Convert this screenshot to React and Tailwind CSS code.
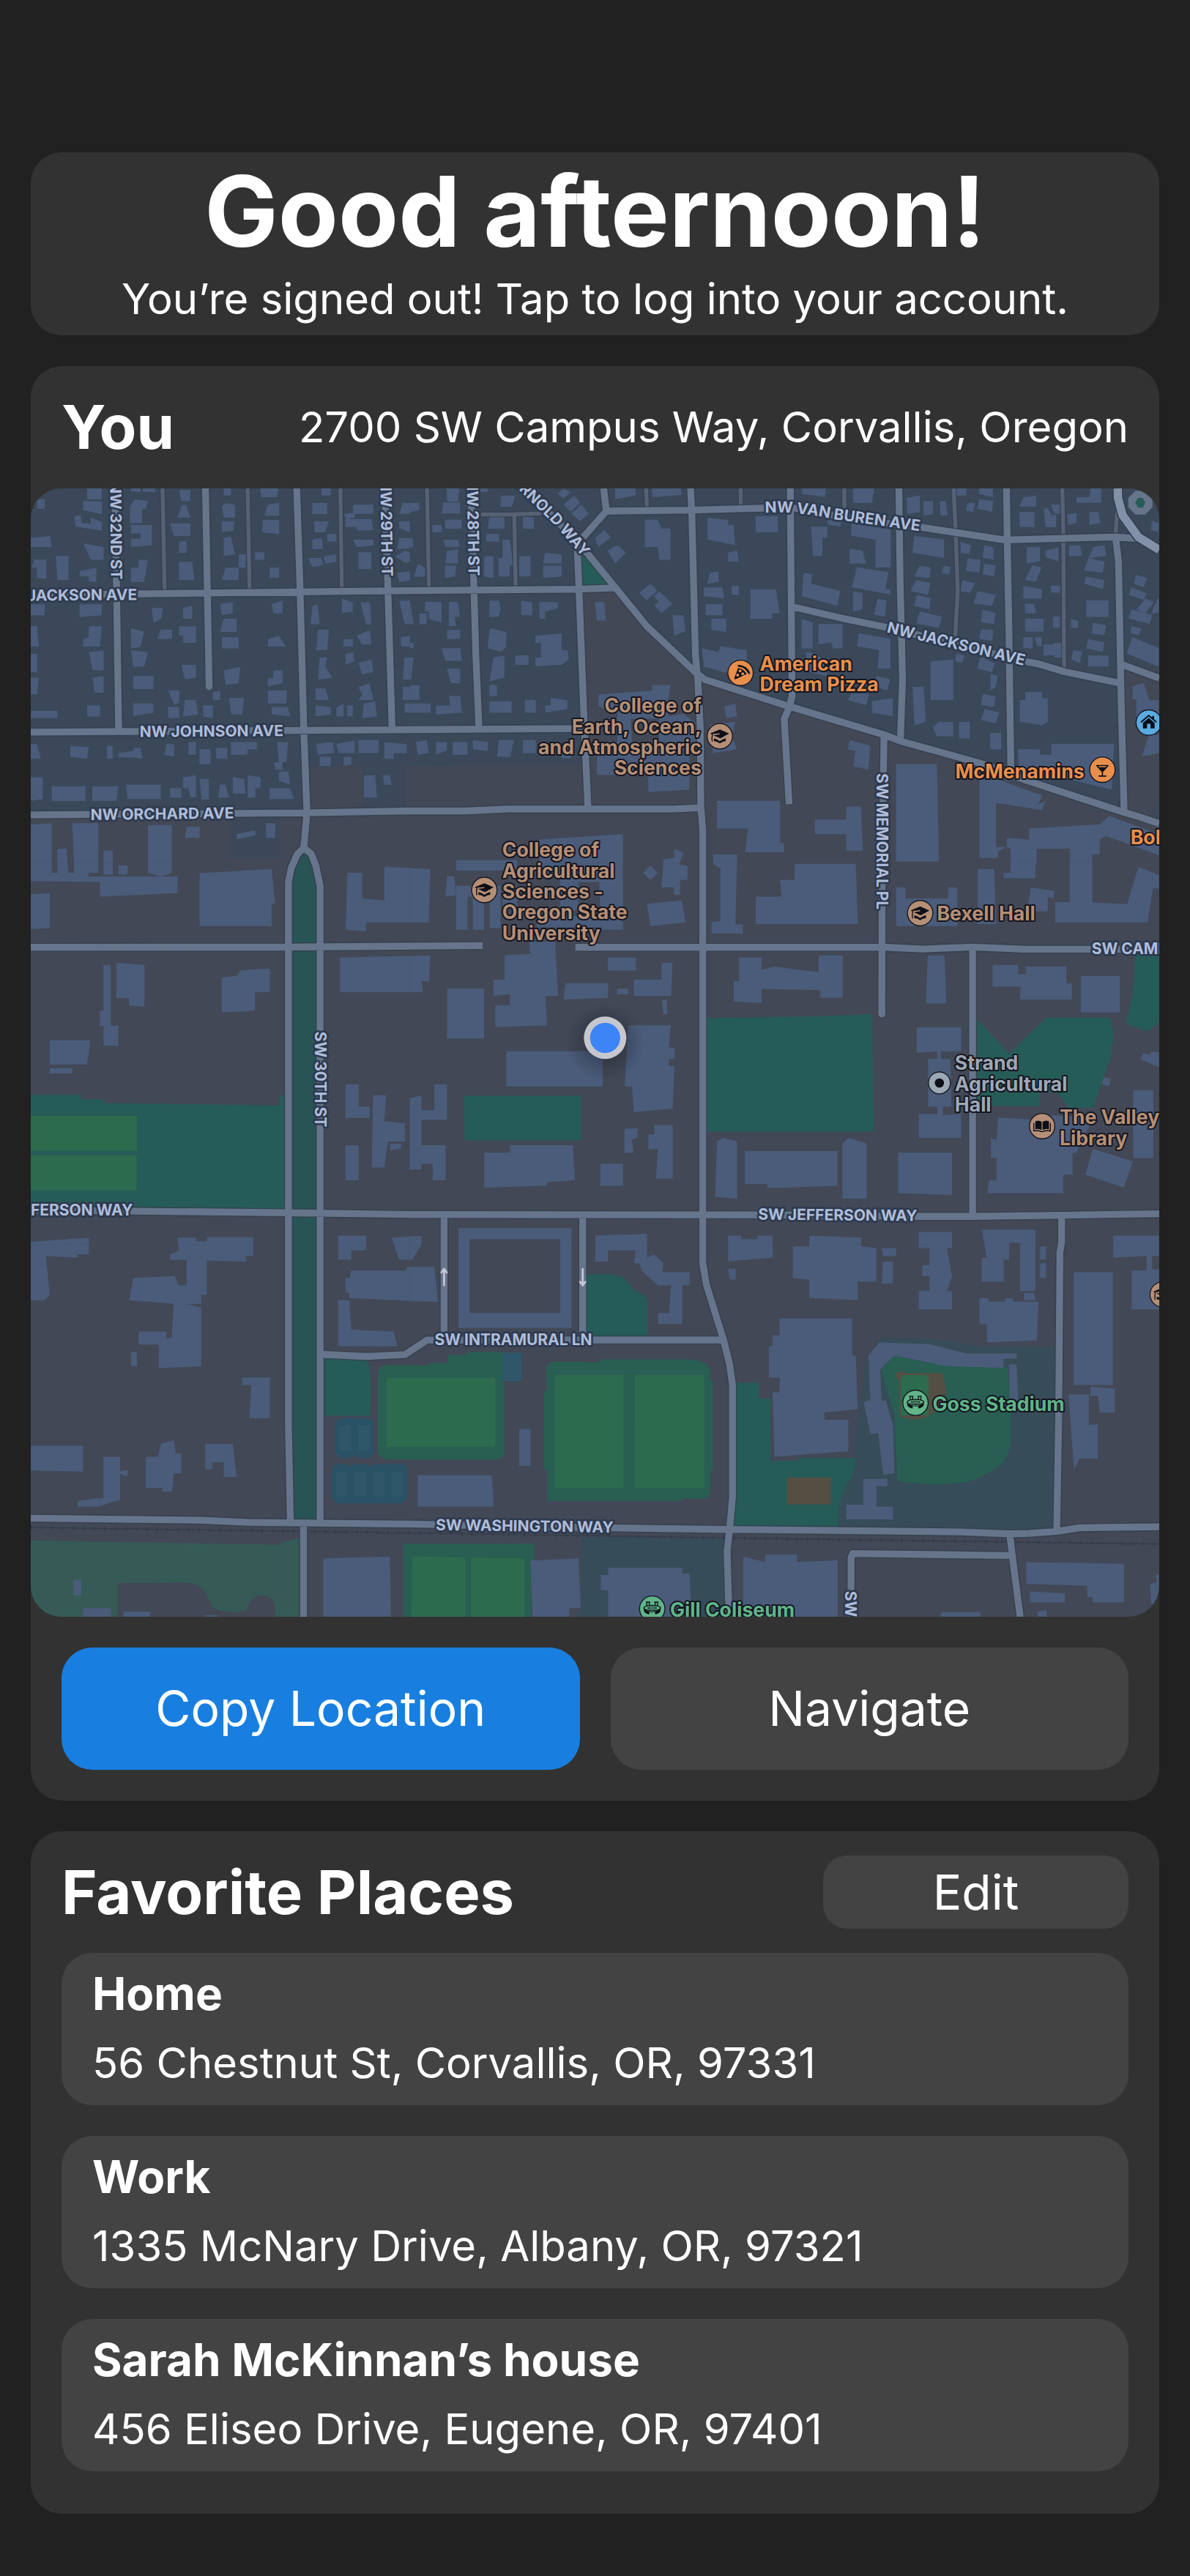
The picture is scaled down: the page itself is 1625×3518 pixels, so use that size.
import React from "react";

/* ---------- Map geometry ---------- */

/* Building footprints, grouped by map tile. */
const BUILDING_TILES = [
  {
    transform: "translate(-6 -21)",
    d: "M32 66h31v38h-31z M237 0H297V66H237z M221 72L298 76V126L221 110z M184 134L211 131L214 163L252 166V141L298 158V194L191 178z M0 224L84 216L93 262H0z M221 246L305 262V314H252z M109 298H161V396H115z M20 314H70V390H32V345H10z M206 360L275 345V404H244V382L206 381z M0 496H63V541H0z M206 496H297V541L206 548z M0 585H32L39 669H0z M244 585L297 587L290 669H221V640L244 630z M0 699H32V774H0z M244 692L305 685V767H260z M0 797H39L32 864H0z M260 797L305 790V858H268z M237 910H290V956H237z M0 933H115V963H0z M417 0H455V36L417 34z M465 0H516V36L465 34z M432 66L486 73L478 104H463V163H412V96z M417 171H502V254L417 261V227H456V206H417z M448 314H486L471 405H417V346H448z M614 28L660 27V73H622z M625 89H643L660 141H607z M577 164H660V216H592z M614 238H645V285H614z M614 322H668L676 396H614z M501 511H547L540 556L509 571z M630 511L668 502V555H630z M539 600H585V638H524z M614 586H683V654H630V624H614z M417 594L471 608L456 670L417 677z M417 684L486 692L471 752H426z M426 790H509V843H426z M426 903H509V940L426 955z M623 744H683V797L638 804z M569 849H615V900L594 909z M569 917H615V963H569z M638 888H683L691 948L630 955z M713 910H752V963L713 956z M752 856L782 850V888H752z M797 0H827V50H797z M789 96L805 81L843 88V140H797z M789 155L842 157L835 195L789 201z M797 224L826 216L843 291L797 298z M858 291H887V345H858V396H789L805 345H858z M782 495L834 487V533L789 540z M797 555H850V609H782z M789 631H858V677H789z M797 767L865 752L858 819L805 827z M819 880H880L873 948H827z M944 0H1024L1015 57H950z M978 88L1024 81V133H963z M957 149L1024 151V208L955 201z M925 283H963V314H925z M985 345H1024V388H985z M993 496L1038 481V533H1001z M978 639L1023 624L1052 669H978z M1001 767H1038V819L978 833V799H1001z M978 849H1055V903H978z M993 917H1060L1069 955L993 947z M1198 0H1236V50H1198z M1160 81H1221V126H1160z M1167 156H1228L1212 201H1171z M1160 231L1198 224L1205 269H1160z M1221 208H1259V239H1221z M1144 306H1196L1205 335L1160 344z M1206 300L1258 291V321L1213 330z M1327 88H1410V125H1327z M1290 126L1334 119V141L1300 146z M1296 147H1402L1410 193H1342V179H1296z M1327 231H1410V254L1342 262z M1349 283H1402V352H1349z M1531 81H1560V125H1516z M1516 156H1560V200L1516 184z M1516 224H1560V267L1508 270z M1501 300L1540 276L1560 285V320L1545 328z M1508 367L1560 360V398L1516 405z M1160 502L1182 497L1190 578H1153z M1281 472L1326 489V526L1281 533z M1357 488H1396L1402 578H1380z M1516 481H1560V578H1538z M1183 600H1228L1221 684H1176z M1288 639H1326V669H1288z M1342 624L1396 601L1402 661H1364z M1522 632L1560 625V670L1524 668z M1190 714H1221L1213 750L1243 797L1183 805z M1296 699L1327 692L1333 729L1296 744z M1349 737L1402 722L1410 774L1364 783z M1538 714H1560V804H1531z M1173 841H1213L1228 888H1173z M1349 835L1394 820L1411 888H1349L1365 864z M1531 835H1560V888H1531z M1173 910L1236 918V948L1173 955z M1258 920L1288 903V955H1258z M1303 910H1326V955H1303z M1371 902L1417 894L1425 955L1364 963z M1538 903H1560V940H1538z M0 1069H32L47 1129H0z M168 1076L244 1083L236 1129L168 1121z M319 1076H342V1129H319z M365 1106L424 1097L430 1084H456L464 1128L365 1122z M562 1069H593V1121L554 1113z M652 1061H683V1113H652z M698 1090H743V1152H698z M766 1084H811V1129H766z M827 1061H933V1090H895V1113H827z M1016 1061H1061L1054 1143H1038V1174H1012L1001 1144H1023z M1023 1182H1062L1069 1235L1023 1219z M1175 1068L1243 1061L1251 1105L1183 1113z M1190 1121H1236V1159H1190z M1258 1069L1334 1054V1106H1268z M1288 1121H1320V1152L1288 1159z M1349 1053H1432V1106H1349z M1455 1061L1547 1069V1106H1494V1129H1455z M1371 1197H1417L1425 1288H1371z M1448 1197H1477L1486 1235H1456z M0 1205H55V1295L0 1302z M92 1242H230V1302H92z M258 1242H365L357 1302H258z M395 1235H539V1294H403z M577 1250H623V1288H577z M630 1205L683 1197V1287H660L652 1250H630z M698 1212H736V1296H706z M782 1235H804L819 1288H774z M834 1204L880 1212L887 1272H834z M895 1197L948 1205V1250H926V1288H895z M985 1250H1069L1084 1294H985z M0 1400L92 1393V1560H0z M176 1393H283V1560H183z M115 1498H153L157 1560H115z M304 1506H342V1560H304z M486 1401H584V1560H486z M645 1408H698V1453H638z M850 1438L926 1423V1443L850 1460z M970 1393H1008V1453H970z",
  },
  {
    transform: "translate(1554 -21)",
    d: "M0 80H38V110L0 118z M150 0H205L197 74H152z M138 79H205V124H130z M92 171H130V201H92z M144 149H212V186H144z M137 231H197L205 261H145z M0 224H10L15 262H0z M152 278L197 269V329H145z M144 338H190L185 382L144 389z M32 330L62 347V383H17z M288 0H319V35H288z M380 51H431L418 96H372V54z M326 134H387V186H319z M463 134L508 141V186H463z M312 208H365V239H312z M380 231H409L424 337H409V383H364V306H380z M304 299H342V389L304 382z M448 299H494V382H448z M554 284L622 292V329H546z M546 338H622V382L546 389z M606 43L630 22L658 37L630 63z M630 87L673 52L698 78L660 118z M661 125L702 88L734 125L698 155z M758 224L796 193L824 222L774 260z M811 276L850 253L886 284L841 329z M841 0H925V50L841 65z M993 0H1108L1113 48L993 57z M963 149H1016L1030 185H1068V314H1023L1016 262H963z M1220 141L1304 151V170H1327L1333 253L1220 231z M1417 134H1508V201H1417z M1304 284L1341 276L1348 321H1304z M1228 368L1265 360V403L1220 412z M1205 427H1281L1288 471L1205 464z M1319 420H1348V458H1319z M1395 435H1500L1515 532H1485V555H1395z M1212 496H1281V541H1212z M1235 555H1296V609L1235 600z M940 449L986 412L1015 441L970 479z M1000 463L1022 443L1075 494L1031 532L1000 500L1020 486z M1076 541H1121L1129 607L1083 624z M1197 677L1265 692L1273 668L1380 684V780L1288 775L1205 750z M62 487H130V571L78 556V525H62z M160 487H197L205 548H183L190 585H160z M39 534H69V578H39z M0 481L15 578H0z M326 481H364L372 511L364 548H326z M456 481L501 488V541H456z M530 487H607V511L554 526V556H530z M758 487H796L803 563H766z M152 601H206V638H152z M0 654H15V676H0z M327 594L395 609V670L372 691L319 676z M514 625L622 616V684H645L652 721L622 744L514 751V714H537V654H514z M130 676H206L213 728H145z M342 714L387 706V797L326 811z M432 706H486V744H432z M0 714H15L5 804H0z M152 759H206V819H168z M0 828H39V888H0z M326 827H357V872H326z M160 872H206L213 940L107 948V911H165z M0 903H85V940H0z M326 894H417V940H326z M471 888H516V940H471z M577 880L645 888V925L554 940V910H577z M24 1060L69 1053L77 1106L32 1113z M107 1061H152V1094L107 1113z M175 1061H236V1113H175z M258 1053L319 1061V1098L258 1090z M365 1053H426L411 1121H357z M463 1053H516V1106H463z M773 865L993 850V827H1068L1058 900V965H905L910 1060L1145 1120V1195H766V1060H850V945L773 915z M1020 962L1120 945L1180 990V1060H1020z M620 1100H660V1128H620z M1228 990L1333 978L1320 1040L1340 1090L1242 1106z M975 1195H1145V1256L978 1265z M1288 915L1333 903L1341 955L1296 963z M1258 1302H1517V1475H1532V1513H1373L1387 1415H1258z M530 1460L873 1438V1560H530z M190 1545H440V1560H190z M1083 1498L1121 1514L1105 1560H1038V1543L1083 1535z M1243 1522H1341V1560H1243z",
  },
  {
    transform: "translate(3069 -21) scale(1.014 1)",
    d: "M92 0H190L184 57L90 43z M297 0H387L373 80H297z M514 60L567 50V118L516 126z M582 73H620V127L582 132z M648 73H672L679 132H650z M710 0H754V50H710z M806 0H862L862 57L806 43z M762 81L790 80L782 118L752 110z M806 65L864 73L858 118L798 104z M985 57L1037 51V95H970z M970 118H1030V179H970z M1067 103H1085L1100 130H1118V180H1075z M1097 88H1134L1134 125L1110 123z M1163 126L1200 123V163L1165 171z M1252 118H1289L1298 163L1252 171z M1260 0H1300V80H1200V57H1252z M1505 155L1533 163V200L1500 193z M127 178H193V223H173V298H135z M193 150L250 156L245 178L196 170z M290 165L449 190V345H388V231L290 215z M283 268L336 276L350 329H283z M544 216L665 231V306L537 284z M731 239L774 254L767 290L732 284z M827 253L865 263V313L821 305z M999 262H1052V320L999 329z M1075 277L1127 262V321L1075 302z M1170 254H1215L1222 298H1170z M1268 262L1313 254L1320 298L1248 307z M97 366L133 374L127 411L246 441L233 502L90 463z M313 344L440 365L428 433L448 436V456L292 426z M297 442L335 450V517L297 525z M396 473L433 480L425 547L382 538z M566 337L611 345L605 389L546 383z M552 397L610 410L600 457L529 442z M555 457L611 471L605 516L544 502z M567 525L656 547L643 593L553 575z M663 338L692 344L684 375L656 368z M760 307L813 314L807 366L753 359z M827 330L873 337L866 382L821 374z M738 397L790 410L770 449L731 443z M800 442L873 457L858 502L784 494z M820 518L873 532L866 577L814 570z M815 599L864 601L859 646L806 637z M1021 336L1059 345L1036 404L992 397z M985 420L1060 435V473H985z M1097 420H1134V449H1097z M1248 306L1314 321L1306 367L1231 358z M1238 382L1313 397L1306 434L1231 411z M992 494H1029L1037 533H992z M992 555H1067V608H992z M1105 547H1133V592H1105z M1178 556L1209 566L1205 593L1178 592z M1239 480H1329V548H1239z M1267 571L1320 583L1313 623L1261 615z M985 631H1023V676H985z M1031 631H1059V669H1042z M1067 660L1105 662V654H1141V714H1110V705H1067z M1187 684L1223 690L1213 736L1179 721z M1247 639L1313 652L1306 691L1240 677z M1247 706H1329V750H1247z M1440 375L1485 389L1472 427L1433 413z M1420 427L1483 450L1473 479L1411 458z M1480 472L1513 486L1480 533L1442 517z M1423 517L1507 540L1495 577L1410 554z M1528 472L1533 470V530L1502 534z M1423 586L1463 595L1452 623L1418 613z M1425 630L1533 675V752L1403 698z M89 556L134 570V677H89z M157 577H254V677H216L208 653L157 660z M320 615L448 638V759H396L403 684L314 668z M107 692L150 700L190 740V790L105 770z M392 790L447 803L434 849L380 830z M275 888L290 862L361 862L351 910z M374 893L457 880V955L374 940z M714 698L748 705L738 736L710 729z M812 710L870 738L858 775L799 759z M611 730L702 722V888H611z M853 781L881 789L874 835L851 850z M822 863L874 873L866 917L814 909z M829 925L888 940L874 985L814 970z M537 834H582L591 978L545 993z M645 978H702V1038H635L620 1000z M725 978H769V1046H725z M851 1023H896V1091H851z M993 856H1061V880H1084V978L1060 993L971 978V888H993z M1427 832L1472 817L1495 890L1533 888V1000H1442V885H1427z M1493 1030H1533V1106L1464 1121z M283 1053L367 1075L358 1174L299 1159L306 1098L276 1090z M963 1090H1053V1113H1098V1068H1352L1343 1256L1160 1210H970z M471 1151H636L644 1551H471z M808 1215H885L1062 1279L1045 1316L1076 1302L1061 1339L875 1310V1491H920L884 1508L883 1536H808z M919 1453L1009 1460V1415L1296 1398L1332 1363L1533 1440V1525L1318 1445L1294 1460V1521H1264V1560H1173V1498H1038V1560H934V1500L919 1490z M142 1378H269V1325H329L336 1506H269V1438H142z M0 1302H2V1475H17V1513H0z",
  },
  {
    transform: "translate(-6 1539)",
    d: "M0 0H92V37H115V0H157L160 37H183V0H283V37H244V52H607V120L289 134V74L0 70V40z M304 0H342V44H304z M365 7H403V44H365z M486 0H584V37L540 52L486 37z M0 125L84 120V263L0 268z M698 38L993 21L1008 163H993V255H698z M1304 37H1364V142L1455 150V13L1560 16V240H1380V277L1296 270z M304 414H334V663H365V746H304V663H289V602H304z M357 406L472 414V586L410 580V550H357z M789 466L850 459L866 436L986 429V526H925V602L789 609z M84 723H251L236 822H84z M84 837H177V859H84z M1273 384L1560 377V526H1273z M1296 904H1350V995H1395V1041H1296z M1409 949H1463L1455 1055L1539 1063V1138H1470L1455 1245H1403z M1478 1147H1524V1167L1478 1175z M1296 1153H1350V1297H1296z M0 1550L244 1532V1560H0z M607 1532H683V1547H728V1530H918V1560H610z M1266 1524H1380V1560H1266z M1486 1532L1560 1527V1560H1494z",
  },
  {
    transform: "translate(1554 1539)",
    d: "M0 18L84 22L77 240H0z M152 51H182L190 128L145 134z M190 0H440V28H190z M190 90H372V265L327 262V135H304V270H258V135H236V270H190z M380 90H440V180H380z M530 0H873V270H785L775 75H690V190H615V60L530 40z M520 215H800V260H520z M955 37L986 7L1015 37L986 66z M1038 0H1100L1138 8V66H1107V127H1083V97H1031z M971 164L1114 149L1130 240L986 255z M1243 0H1340L1334 248H1364V286H1236V240L1273 233V20z M1517 66H1560V247H1417V134H1524z M0 378L84 375L78 481H47L54 526H0z M152 512H304V716H152z M388 375L493 368L489 320L595 318L607 542H555L562 662L350 669V579H410V534L342 541V474H388z M637 489H812V549L630 556z M811 384H926V437H811z M849 512H895V535H849z M918 474H1031V406H1076L1070 542H918z M1031 557H1054V617H1039z M1349 384H1441V435L1494 421L1560 430V516L1441 512V571L1327 564V481H1349z M395 768H790V912H395z M895 662H1069L1061 753H1085V800H1061V828H1084L1077 1003L918 1017L910 912H880z M100 904H152V1048H47V1153H146V1297H93V1229H47V1252H0V960L47 950V1010H100z M879 1085H933V1123L910 1131L917 1184H879z M1001 1071H1077V1290H1009L1016 1169H978V1109H1001z M304 1184H410V1153H668L676 1297L562 1305V1319L304 1327z M781 1229H873V1320H781z M1258 1139L1281 1123L1341 1138V1372L1251 1365z M1373 1177H1560V1327L1464 1328V1312H1373z M199 1493H662V1560H615V1538H244V1560H199z M0 1526H47V1560H0z M760 1524L972 1516V1560H760z M1304 1524H1357V1538H1425V1524H1486V1560H1304z",
  },
  {
    transform: "translate(3069 1539) scale(1.014 1)",
    d: "M62 0H308L316 247H0V134H8L2 66H60z M471 97H509V142H681V97H718V255H471z M801 21H867L875 247H801z M934 0H1034V59H905V37H934z M1016 97L1112 111L1106 141L1084 135V195H1000z M1173 0H1264V158L1405 165L1450 13L1533 45V103L1510 97L1487 240H1114V157H1173z M0 425L158 443V376H255V549H165V518L0 515z M599 376H667L674 572H591z M861 414H964V452H995V421H1159V489H1181V556H973V503H861z M1217 459H1375V609H1217z M554 670H734V768H651V800H690L695 995H660V1031L734 1025V1123H562V1025H638V995H600V800H638V768L554 775z M1470 776L1496 783L1502 768L1533 772V832L1458 802z M1310 875L1339 881L1331 911L1303 903z M1429 927H1511V1206H1429z M884 1040L1010 1047L1100 1030L1250 1040V1080L1200 1185H1184V1274H1147V1350H839L847 1297H877V1206H854V1125L877 1131z M1266 1168L1428 1220L1391 1327L1236 1274z M0 1177H234V1320L0 1327z M254 1146L278 1124L352 1146V1372H254z M479 1184H697V1357L479 1350z M120 1524L330 1532V1560H120z M562 1509H697V1560H562z M817 1500H1034V1560H972V1553H928V1560H828z M1349 1524H1533V1560H1349z",
  },
  {
    transform: "translate(-6 3099)",
    d: "M0 0H244V40H198V54L68 47L84 206L62 229H0z M610 0H918V47H888V70L728 66V207H705V244H645L705 259V499L531 507V410H448V357H562V387L584 380L592 243L410 229L426 137L594 130L614 167H645V63H577V40L614 25z M417 440H441V499H417z M873 545H986V712H902L910 577H873z M0 825H221V931L0 926z M304 870H372V931L403 924V953L372 940V1045L285 1074H198V1051L304 1038z M478 870H526L540 818L592 802L600 856H623V938H592L585 1013H546V998H478z M721 818H834L850 953H797V893H751V922H721z M1266 0H1380V24H1320V62H1266z M1494 0H1560V62H1516z M1319 107H1546V92H1560V231L1311 220V198H1296V138H1311z M1266 229H1311L1320 349L1494 357L1508 417H1266z M1205 1287L1478 1279L1482 1525H1205z M181 1376H213V1438H181z M221 1491H334V1525H221z M386 1505H494V1525H386z M721 1520H771V1525H721z",
  },
  {
    transform: "translate(1554 3099)",
    d: "M0 0H47L10 62H0z M0 93H100L115 236L0 231z M199 0H244V281H615V0H662V342H199z M760 0H972V55L1001 40L1040 77L1033 114H1146V167H1116V326H1017V281H1062L1070 167H1015L950 108L941 77H918L926 24H812V70H760z M1304 0H1487V54L1304 69z M1304 99H1335V144H1311z M448 756H494V908H448z M32 946H335L343 1074H32z M1517 304H1560V866L1494 870L1486 606H1517V545H1471V417H1486V372H1517z M495 1295L691 1287L700 1491H653V1525H502z M812 1326H1116V1348H1146L1154 1525H812V1417H782V1355H812z M1366 1279L1456 1302V1272H1560V1525H1366z",
  },
  {
    transform: "translate(3069 3099) scale(1.014 1)",
    d: "M53 8H120V0H330V8L391 15V152H316V228L120 220V145L53 137z M413 15H471V47H418z M418 70H458V160H412z M562 0H697V15H676L697 130L676 191H697V266H562V191H606V130H577V85H606V15H562z M828 0H928V62H906V152H817V55H838z M972 0H1034V191H972z M1053 8H1077V62H1053z M1053 77H1077V137H1053z M988 199H1028L1034 228H988z M808 220H846V235H912V220H944V235H1046L1040 394L838 401V326H808z M1189 114H1347V576H1189z M1349 0H1533V47H1506V101H1533V266H1423V107H1483V47L1349 54z M0 304H293V455H308L316 675L181 689V719H278V848L0 868z M1257 583L1355 591V689H1294L1287 621H1257z M1168 614H1250V740L1287 736V878H1212L1190 923z M359 455L402 402L605 408L755 446H958V468H905V506L675 499L465 455L407 513L412 642L430 640L458 740L464 938L419 944L398 772L368 779L339 645L367 637z M927 492H958L965 640H930z M338 961H436V990H391V1074H458V1127H270V1066H338z M0 1272H70V1302L235 1295V1525H0z M997 1302L1392 1309V1467H1265V1445H1243V1399L997 1391z M1012 1422L1153 1430V1467H1012z M655 1507H812V1525H648z M1040 1505L1078 1498L1082 1525H1046z M1520 1355L1533 1352V1470L1502 1475L1497 1391L1525 1385z",
  },
];

const RESIDENTIAL =
  "M0 0H4625V775L4468 722L4481 1325L4073 1194L3900 1129L3566 1036L3110 894L2764 784L2724 754L2524 564L2394 404L2247 415L2269 1129L1534 1139V1305L1359 1307V1140H1144L1130 1320L0 1335Z M814 1340H1024V1514H814Z M4625 1260L4590 1345L4625 1360Z";

const PARKS = [
  ["#295455", "M1119 1485L1152 1545L1176 1625V4240H1080L1072 3839V1610L1090 1545Z"],
  ["#265c58", "M2257 262L2376 400H2260Z"],
  ["#265c58", "M0 2486H207V2504H302V2519L1020 2529V2489H1054V2965L0 2952Z"],
  ["#2d6b4e", "M0 2572H435V2715H0Z M0 2734H434V2877H0Z"],
  ["#265c58", "M1774 2489H2256V2672H1778Z M2765 2171L3221 2164L3449 2155L3455 2637H2765Z"],
  ["#265c58", "M3877 2174L4010 2317L4162 2169H4408Q4430 2171 4430 2184Q4440 2229 4435 2279L4423 2339L4355 2538L4250 2539Q4215 2474 4184 2474L4136 2479V2532H3877Z"],
  ["#265c58", "M4524 1900H4625V2187L4580 2226L4487 2194Q4530 2059 4524 1900Z"],
  ["#265c58", "M1190 3560H1379Q1394 3619 1394 3699L1391 3801H1190Z"],
  ["#285f52", "M1554 3594H1442L1423 3619V3957L1449 3980H1922L1941 3959V3669H1934V3540H1784V3552H1709V3584H1632V3594Z"],
  ["#2d6b4e", "M1458 3646H1904V3928H1458Z"],
  ["#2f5769", "M1932 3542H2012V3659H1932Z"],
  ["#2a5266", "M1269 3811H1389L1405 3829V3954L1384 3975H1344L1327 3961L1309 3975H1269L1248 3954V3831Z M1252 3999H1294L1309 4011L1324 3999H1379L1390 4011L1404 3999H1529L1543 4017V4139L1524 4159H1252L1234 4139V4017Z"],
  ["#2f5769", "M1264 3841h50v104h-50z M1341 3841h48v104h-48z M1249 4029h46v104h-46z M1326 4029h48v104h-48z M1404 4029h48v104h-48z M1479 4029h48v104h-48z"],
  ["#265c58", "M2275 3221H2364Q2434 3221 2454 3264L2466 3281Q2514 3304 2527 3327V3480H2275Z"],
  ["#285f52", "M2134 3580L2332 3581V3570H2704Q2784 3577 2784 3619V3661H2796V4026H2784V4119L2764 4140H2669V4150H2116V4021H2102V3699H2114L2112 3599Z"],
  ["#2d6b4e", "M2147 3633H2429V4098H2147Z M2476 3633H2760V4098H2475Z"],
  ["#364d59", "M3307 4260Q3307 4139 3348 4079Q3383 4029 3383 3879L3424 3569L3490 3479Q3718 3479 3880 3517L4198 3519L4188 4270Z"],
  ["#265c58", "M2890 3665H2984V3731H3032V3986H3145V3974H3380Q3378 4029 3348 4079Q3307 4139 3307 4262H2876Q2890 4139 2890 3665Z"],
  ["#554f43", "M3098 4054H3280V4164H3098Z"],
  ["#285f52", "M3485 3612L3541 3556L3759 3598L4004 3602L4017 3799V3899Q4012 3969 3971 4004Q3911 4049 3860 4066Q3718 4099 3551 4066L3541 3799Z"],
  ["#554f43", "M3544 3634L3563 3614L3581 3626H3736L3751 3689V3699Q3748 3759 3677 3804Q3627 3829 3561 3804L3557 3659Z"],
  ["#2d6b4e", "M3586 3634H3660Q3680 3634 3680 3660V3800H3566V3660Q3566 3634 3586 3634Z"],
  ["#365b56", "M0 4312L244 4317L1014 4329Q1054 4309 1118 4300V4625H1001Q1012 4579 984 4549Q949 4524 912 4547Q899 4564 882 4601Q834 4609 779 4602L744 4584Q724 4539 704 4511Q684 4487 634 4485L355 4487V4625H0Z"],
  ["#285f52", "M1526 4325H2061V4399L2049 4625H1526Z"],
  ["#2d6b4e", "M1564 4377L1782 4383V4625H1560Z M1805 4383L2024 4386V4625H1804Z"],
  ["#364d59", "M2259 4296L2856 4304V4625H2234L2259 4580Z"],
];

const MINOR_ROADS =
  "M540 0L549 430 M889 0L897 425 M1269 0L1275 420 M1624 0L1632 415 M1844 107L1984 106L2110 102 M1982 107L1987 410 M2522 0L2526 85 M2909 0L2911 80 M3334 0L3335 110 M3782 0L3791 180L3799 420L3787 640 M4228 0L4232 190L4235 745 M4456 60L4445 195";

const ROADS =
  "M345 0L352 430L360 994 M716 0L724 430L731 812 M1090 0L1104 420L1119 990L1132 1330L1119 1473L1092 1500L1068 1555L1056 1612V3839L1064 4237 M1119 1473L1149 1497L1168 1545L1186 1629V4240 M1452 0L1464 419L1481 993 M1804 0L1816 400L1824 680L1837 985 M2010 -20L2264 245L2394 404L2524 564L2724 754L2764 784L3094 889L3495 1009L3566 1036L3900 1129L4073 1194L4484 1329L4540 1345L4625 1374 M2348 0L2359 93L2264 200 M2239 225L2247 415L2269 985L2284 1318 M2359 93L2704 89L3004 81L3130 81L3400 130L3667 162L3992 211L4438 199L4550 207 M2704 0L2709 90L2724 680L2734 790L2744 980L2746 1300L2754 1400V3174L2769 3264L2839 3489L2864 3589L2876 3674V4134L2864 4269L2854 4359L2862 4625 M3113 0L3117 480L3120 850L3110 895L3088 945L3108 1294 M3558 0L3563 380L3573 780L3564 1036 M3999 0L4002 210L4009 580L4017 1170 M4445 190L4458 300L4466 720L4470 920L4481 1325 M3117 484L3333 534L3505 569L4075 709L4128 719L4235 751L4468 799 M4466 720L4625 778 M0 438L714 429L1554 419L2244 413L2394 408 M0 999L1554 989L2269 984 M0 1338L1124 1330L1554 1322H1784L1954 1314H2634L2744 1309 M3497 1014L3489 1539L3488 2154 M0 1881L1054 1880L1852 1874 M2232 1881H3505L3657 1888L3860 1880L4073 1889H4625 M3860 1880V2984 M0 2958L1054 2969L1554 2976L3114 2978L3640 2984H3860L4225 2979L4625 2973 M1694 2976V3490 M2262 2976V3490 M1186 3549L1374 3558L1534 3550L1624 3491L2839 3490 M0 4221L694 4229L894 4238L1554 4245L2254 4259L2854 4267L3069 4269L3809 4277L4012 4285L4093 4283L4205 4275L4301 4260L4625 4256 M1118 4239V4625 M4225 2979V3090L4218 3130L4213 3799L4205 4275 M4012 4285L4027 4409L4055 4625 M4022 4374L3368 4366L3362 4384V4625";

const RAILWAY = "M0 4259L1554 4281L3069 4305L4625 4327";

/* ---------- Map pins ---------- */

const TAN = "#b58f76";
const ORANGE = "#e88f4c";
const GREEN = "#60b488";
const SILVER = "#9da8b5";
const INK = "#0d0f18";

function CapGlyph() {
  return (
    <g>
      <path d="M-40 -11L-4 -26Q0 -28 4 -26L38 -11L6 7Q2 9 -2 7L-26 -4L0 -8V-12L-33 -9Z" fill={INK} />
      <path d="M-33 -9L-30 -6Q-34 6 -31 20" fill="none" stroke={INK} strokeWidth="4" strokeLinecap="round" />
      <path d="M-24 8Q-10 13 0 20Q10 13 24 8V20Q12 20 0 29Q-12 20 -24 20Z" fill={INK} />
    </g>
  );
}

function PizzaGlyph() {
  return (
    <g>
      <path d="M-8 -29Q22 -27 35 1" fill="none" stroke={INK} strokeWidth="8" strokeLinecap="round" />
      <path d="M-10 -20Q14 -16 25 5L-20 26Q-27 28 -25 20Z" fill={INK} />
      <circle cx="-2" cy="-8" r="6" fill={ORANGE} />
      <circle cx="9" cy="4" r="6" fill={ORANGE} />
      <circle cx="-12" cy="9" r="6" fill={ORANGE} />
    </g>
  );
}

function MartiniGlyph() {
  return (
    <g fill="none" stroke={INK} strokeWidth="5" strokeLinecap="round" strokeLinejoin="round">
      <path d="M-23 -17H23L3 5H-3Z" />
      <path d="M-12 -8H12L3 3H-3Z" fill={INK} />
      <path d="M0 5V26M-14 26H14" />
    </g>
  );
}

function HouseGlyph() {
  return (
    <g>
      <path d="M-30 -3L0 -29L30 -3" fill="none" stroke={INK} strokeWidth="6" strokeLinecap="round" strokeLinejoin="round" />
      <path d="M14 -27H22V-12L14 -18Z" fill={INK} />
      <path d="M-24 1L0 -19L24 1V24H7V5H-7V24H-24Z" fill={INK} />
    </g>
  );
}

function BookGlyph() {
  return (
    <g>
      <path d="M-28 -20Q-14 -26 -2 -18V16Q-14 8 -28 13Z M28 -20Q14 -26 2 -18V16Q14 8 28 13Z" fill={INK} />
      <path d="M-34 -13V20Q-16 15 0 23Q16 15 34 20V-13" fill="none" stroke={INK} strokeWidth="4" strokeLinejoin="round" />
    </g>
  );
}

function StadiumGlyph() {
  return (
    <g>
      <path d="M-26 -27H-8M8 -27H26M-22 -27V-12M-12 -27V-14M12 -27V-14M22 -27V-12" stroke={INK} strokeWidth="4" fill="none" />
      <ellipse cx="0" cy="-3" rx="34" ry="11" fill="none" stroke={INK} strokeWidth="4" />
      <ellipse cx="0" cy="-3" rx="19" ry="4" fill="none" stroke={INK} strokeWidth="3" />
      <path d="M-34 1Q-20 12 0 12Q20 12 34 1V9Q30 20 12 23V14H-12V23Q-30 20 -34 9Z" fill={INK} />
    </g>
  );
}

const PINS = [
  { x: 2909, y: 756, color: ORANGE, Glyph: PizzaGlyph, tx: 2988, ty: 747, lines: ["American", "Dream Pizza"] },
  { x: 2824, y: 1016, color: TAN, Glyph: CapGlyph, tx: 2749, ty: 919, anchor: "end", lines: ["College of", "Earth, Ocean,", "and Atmospheric", "Sciences"] },
  { x: 1859, y: 1646, color: TAN, Glyph: CapGlyph, tx: 1932, ty: 1511, lines: ["College of", "Agricultural", "Sciences -", "Oregon State", "University"] },
  { x: 4392, y: 1153, color: ORANGE, Glyph: MartiniGlyph, tx: 4318, ty: 1189, anchor: "end", lines: ["McMenamins"] },
  { x: 4582, y: 960, color: "#5aabe0", Glyph: HouseGlyph, lines: [] },
  { x: 3645, y: 1741, color: TAN, Glyph: CapGlyph, tx: 3714, ty: 1772, lines: ["Bexell Hall"] },
  { x: 4145, y: 2614, color: TAN, Glyph: BookGlyph, tx: 4217, ty: 2606, lines: ["The Valley", "Library"] },
  { x: 3626, y: 3748, color: GREEN, Glyph: StadiumGlyph, tx: 3696, ty: 3781, lines: ["Goss Stadium"] },
  { x: 2547, y: 4592, color: GREEN, Glyph: StadiumGlyph, tx: 2620, ty: 4624, lines: ["Gill Coliseum"] },
  { x: 4639, y: 3304, color: TAN, Glyph: CapGlyph, lines: [] },
];

const STREETS = [
  { x: 329, y: 374, r: 89.4, anchor: "end", text: "NW 32ND ST" },
  { x: 1439, y: 361, r: 89, anchor: "end", text: "NW 29TH ST" },
  { x: 1794, y: 359, r: 89, anchor: "end", text: "NW 28TH ST" },
  { x: 436, y: 457, r: -0.5, anchor: "end", text: "NW JACKSON AVE" },
  { x: 741, y: 1017, r: -0.4, anchor: "middle", text: "NW JOHNSON AVE" },
  { x: 539, y: 1356, r: -0.7, anchor: "middle", text: "NW ORCHARD AVE" },
  { x: 3788, y: 658, r: 13.6, anchor: "middle", text: "NW JACKSON AVE" },
  { x: 3466, y: 1447, r: 90, anchor: "middle", text: "SW MEMORIAL PL" },
  { x: 1164, y: 2422, r: 90, anchor: "middle", text: "SW 30TH ST" },
  { x: 418, y: 2981, r: 0, anchor: "end", text: "SW JEFFERSON WAY" },
  { x: 3307, y: 3000, r: 0.5, anchor: "middle", text: "SW JEFFERSON WAY" },
  { x: 1978, y: 3511, r: 0, anchor: "middle", text: "SW INTRAMURAL LN" },
  { x: 2024, y: 4275, r: 0.8, anchor: "middle", text: "SW WASHINGTON WAY" },
  { x: 4348, y: 1909, r: 0, anchor: "start", text: "SW CAMPUS WAY" },
  { x: 3338, y: 4519, r: 90, anchor: "start", text: "SW 26TH ST" },
];

function Label({ x, y, lines, color, anchor = "start" }) {
  return (
    <text
      className="font-bold"
      fontSize="80"
      fill={color}
      stroke="#14151f"
      strokeWidth="12"
      strokeLinejoin="round"
      paintOrder="stroke"
      textAnchor={anchor}
    >
      {lines.map((line, i) => (
        <tspan key={line} x={x} y={y + i * 85}>
          {line}
        </tspan>
      ))}
    </text>
  );
}

function CampusMap() {
  return (
    <svg
      viewBox="0 0 4625 4625"
      role="img"
      aria-label="Map around your location"
      className="block aspect-square w-full rounded-[42px] bg-[#424856] font-[Inter,sans-serif]"
    >
      <defs>
        <path id="arnold" d="M1840 -150L2031 36L2129 131L2178 184L2262 282" />
        <path id="vanburen" d="M3010 100Q3130 92 3290 126L3720 186" />
        <radialGradient id="glow">
          <stop offset="0.5" stopColor="#10131c" stopOpacity="0.25" />
          <stop offset="1" stopColor="#10131c" stopOpacity="0" />
        </radialGradient>
      </defs>

      <path d={RESIDENTIAL} fill="#3a485a" />
      {PARKS.map(([fill, d]) => (
        <path key={d} d={d} fill={fill} />
      ))}
      {BUILDING_TILES.map((tile) => (
        <path key={tile.transform} d={tile.d} transform={tile.transform} fill="#4a5c7a" />
      ))}

      <g fill="none" stroke="#353c49">
        <path d={RAILWAY} strokeWidth="4" />
        <path d={RAILWAY} strokeWidth="16" strokeDasharray="5 38" />
      </g>

      <g fill="none" strokeLinejoin="round">
        <path d={MINOR_ROADS} stroke="#343e4e" strokeOpacity="0.6" strokeWidth="24" />
        <path d={MINOR_ROADS} stroke="#566174" strokeWidth="16" />
        <path d={ROADS} stroke="#343e4e" strokeOpacity="0.7" strokeWidth="38" />
        <path d={ROADS} stroke="#66758b" strokeWidth="28" />
        <path d="M731 800V812M3488 2140V2154" stroke="#66758b" strokeWidth="28" strokeLinecap="round" />
        <path d="M4455 0L4456 40L4475 110L4540 200L4625 252" stroke="#343e4e" strokeWidth="44" />
        <path d="M4455 0L4456 40L4475 110L4540 200L4625 252" stroke="#8290a8" strokeWidth="34" />
      </g>
      <path d="M4528 10H4567L4597 40V77L4567 107H4528L4498 77V40Z" fill="#66758b" />
      <path d="M4540 42H4556L4564 58L4556 76L4540 76L4530 58Z" fill="#265c58" stroke="#265c58" strokeWidth="6" />

      <g fill="none" stroke="#c3c7d6" strokeWidth="8" strokeLinecap="round" strokeLinejoin="round">
        <path d="M1694 3266V3200M1683 3214L1694 3199L1705 3214" />
        <path d="M2262 3200V3266M2251 3252L2262 3267L2273 3252" />
      </g>

      <g
        className="font-bold"
        fontSize="63"
        fill="#b0bdd9"
        stroke="#2d3a4f"
        strokeWidth="16"
        strokeLinejoin="round"
        paintOrder="stroke"
      >
        {STREETS.map((s) => (
          <text key={s.text + s.x} transform={`translate(${s.x} ${s.y}) rotate(${s.r})`} textAnchor={s.anchor}>
            {s.text}
          </text>
        ))}
        <text textAnchor="end">
          <textPath href="#arnold" startOffset="100%">
            NW ARNOLD WAY
          </textPath>
        </text>
        <text>
          <textPath href="#vanburen">NW VAN BUREN AVE</textPath>
        </text>
      </g>

      {PINS.map(({ x, y, color, Glyph, tx, ty, anchor, lines }) => (
        <g key={`${x}-${y}`}>
          <g transform={`translate(${x} ${y})`}>
            <circle r="52" fill={color} stroke="#14151f" strokeWidth="4" />
            <Glyph />
          </g>
          {lines.length > 0 && <Label x={tx} y={ty} lines={lines} color={color} anchor={anchor} />}
        </g>
      ))}
      <circle cx="3724" cy="2437" r="32" fill={INK} stroke="#14151f" strokeWidth="30" />
      <circle cx="3724" cy="2437" r="31" fill={INK} stroke={SILVER} strokeWidth="24" />
      <Label x={3787} y={2384} lines={["Strand", "Agricultural", "Hall"]} color={SILVER} />
      <Label x={4507} y={1459} lines={["Bol"]} color={ORANGE} />

      <circle cx="2354" cy="2270" r="160" fill="url(#glow)" />
      <circle cx="2354" cy="2252" r="87" fill="#c6c7cc" />
      <circle cx="2354" cy="2252" r="62" fill="#3d84f7" />
    </svg>
  );
}

/* ---------- Page ---------- */

const PLACES = [
  { name: "Home", address: "56 Chestnut St, Corvallis, OR, 97331" },
  { name: "Work", address: "1335 McNary Drive, Albany, OR, 97321" },
  { name: "Sarah McKinnan’s house", address: "456 Eliseo Drive, Eugene, OR, 97401" },
];

export default function App() {
  return (
    <main className="flex min-h-screen flex-col gap-[42px] bg-[#212121] px-[42px] pt-[208px] pb-[84px] font-[Inter,sans-serif] text-white">
      <button
        type="button"
        className="flex w-full flex-col items-center rounded-[42px] bg-[#323232] pb-[10px] text-center"
      >
        <span className="text-[134px] leading-[160px] font-bold">Good afternoon!</span>
        <span className="text-[58px] leading-[80px]">You’re signed out! Tap to log into your account.</span>
      </button>

      <section className="rounded-[42px] bg-[#323232]">
        <div className="flex items-center justify-between px-[42px] py-[42px]">
          <h2 className="text-[83px] leading-[83px] font-bold">You</h2>
          <p className="text-[58px] leading-[83px]">2700 SW Campus Way, Corvallis, Oregon</p>
        </div>
        <CampusMap />
        <div className="grid grid-cols-2 gap-[42px] p-[42px]">
          <button type="button" className="rounded-[42px] bg-[#187fe0] py-[42px] text-[66px] leading-[83px]">
            Copy Location
          </button>
          <button type="button" className="rounded-[42px] bg-[#434343] py-[42px] text-[66px] leading-[83px]">
            Navigate
          </button>
        </div>
      </section>

      <section className="flex flex-col gap-[33px] rounded-[42px] bg-[#323232] px-[42px] pt-[33px] pb-[58px]">
        <div className="flex items-center justify-between">
          <h2 className="text-[83px] leading-[83px] font-bold">Favorite Places</h2>
          <button type="button" className="w-[417px] rounded-[33px] bg-[#434343] text-[66px] leading-[100px]">
            Edit
          </button>
        </div>
        <ul className="flex flex-col gap-[42px]">
          {PLACES.map((place) => (
            <li key={place.name} className="flex flex-col gap-[13px] rounded-[42px] bg-[#434343] px-[42px] py-4">
              <h3 className="text-[62px] leading-[80px] font-bold">{place.name}</h3>
              <p className="text-[58px] leading-[83px]">{place.address}</p>
            </li>
          ))}
        </ul>
      </section>
    </main>
  );
}
